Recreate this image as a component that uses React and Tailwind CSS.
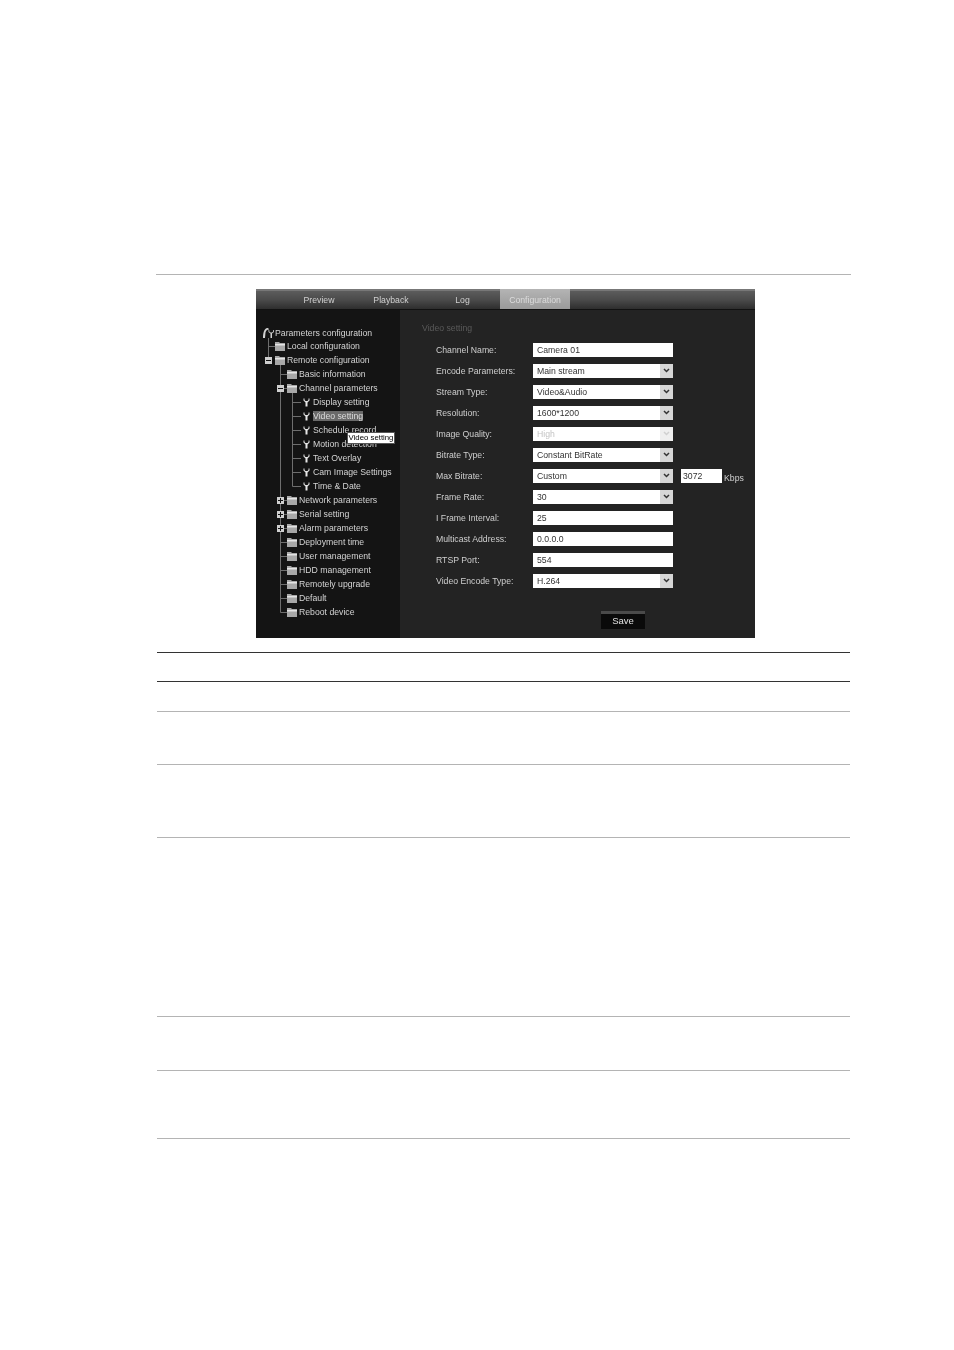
import React from "react";

const tree = [
  { label: "Parameters configuration", type: "root" },
  { label: "Local configuration", type: "folder", depth: 1 },
  { label: "Remote configuration", type: "folder", depth: 1, toggle: "-" },
  { label: "Basic information", type: "folder", depth: 2 },
  { label: "Channel parameters", type: "folder", depth: 2, toggle: "-" },
  { label: "Display setting", type: "leaf" },
  { label: "Video setting", type: "leaf", active: true },
  { label: "Schedule record", type: "leaf" },
  { label: "Motion detection", type: "leaf" },
  { label: "Text Overlay", type: "leaf" },
  { label: "Cam Image Settings", type: "leaf" },
  { label: "Time & Date", type: "leaf" },
  { label: "Network parameters", type: "folder", depth: 2, toggle: "+" },
  { label: "Serial setting", type: "folder", depth: 2, toggle: "+" },
  { label: "Alarm parameters", type: "folder", depth: 2, toggle: "+" },
  { label: "Deployment time", type: "folder", depth: 2 },
  { label: "User management", type: "folder", depth: 2 },
  { label: "HDD management", type: "folder", depth: 2 },
  { label: "Remotely upgrade", type: "folder", depth: 2 },
  { label: "Default", type: "folder", depth: 2 },
  { label: "Reboot device", type: "folder", depth: 2 },
];

const fields = [
  { label: "Channel Name:", value: "Camera 01" },
  { label: "Encode Parameters:", value: "Main stream", select: true },
  { label: "Stream Type:", value: "Video&Audio", select: true },
  { label: "Resolution:", value: "1600*1200", select: true },
  { label: "Image Quality:", value: "High", select: true, disabled: true },
  { label: "Bitrate Type:", value: "Constant BitRate", select: true },
  { label: "Max Bitrate:", value: "Custom", select: true, extra: true },
  { label: "Frame Rate:", value: "30", select: true },
  { label: "I Frame Interval:", value: "25" },
  { label: "Multicast Address:", value: "0.0.0.0" },
  { label: "RTSP Port:", value: "554" },
  { label: "Video Encode Type:", value: "H.264", select: true },
];

// y positions of the table rules under the screenshot
function Rule({ className }) {
  return <div className={`ml-[157px] w-[693px] h-px ${className}`} />;
}

function Folder() {
  return (
    <svg width="10" height="9" viewBox="0 0 10 9" className="shrink-0">
      <path d="M0 0h4l1 1h5v8H0z" fill="#a8a8a8" />
      <path d="M0 2h10v1.500H0z" fill="#e4e4e4" />
    </svg>
  );
}

function Wrench() {
  return (
    <svg width="7" height="9" viewBox="0 0 7 9" className="shrink-0">
      <path d="M0.500 0.500v2l2 2v4h2v-4l2-2v-2l-1 0v1.500l-1 1h-2l-1-1v-1.500z" fill="#e6e6e6" />
    </svg>
  );
}

function Toggle({ sign }) {
  return (
    <span className="relative w-[7px] h-[7px] shrink-0 bg-[#cfcfcf] flex items-center justify-center">
      <span className="w-[5px] h-px bg-[#111]" />
      {sign === "+" && <span className="absolute w-px h-[5px] bg-[#111]" />}
    </span>
  );
}

function TreeRow({ row }) {
  if (row.type === "root") {
    return (
      <div className="h-[13px] flex items-center pl-[6px] text-[#d4d4d4]">
        <svg width="13" height="12" viewBox="0 0 13 12" className="shrink-0">
          <path d="M1 11C1 6 2 2 5 1c1 0 2 .5 2 1.500-2 0-3 1-3.500 3L3 11z" fill="#d0d0d0" />
          <path d="M6.500 3v2l2 1.500V11h1.500V6.500L12 5V3h-.8v1.500L10 5.500H8.500L7.300 4.500V3z" fill="#d0d0d0" />
        </svg>
        <span>{row.label}</span>
      </div>
    );
  }
  if (row.type === "leaf") {
    return (
      <div className="h-[14px] flex items-center pl-[47px] text-[#d4d4d4]">
        <Wrench />
        <span
          className={`ml-[3px] ${row.active ? "bg-[#6a6a6a] text-[#dcdcdc] h-[10px] leading-[10px]" : ""}`}
        >
          {row.label}
        </span>
      </div>
    );
  }
  return (
    <div
      className={`relative h-[14px] flex items-center text-[#d4d4d4] ${
        row.depth === 1 ? "pl-[19px]" : "pl-[31px]"
      }`}
    >
      {row.toggle && (
        <span className={`absolute flex ${row.depth === 1 ? "left-[9px]" : "left-[21px]"}`}>
          <Toggle sign={row.toggle} />
        </span>
      )}
      <Folder />
      <span className="ml-[2px]">{row.label}</span>
    </div>
  );
}

function Field({ field }) {
  return (
    <div className="h-[21px] flex items-center">
      <div className="w-[97px] shrink-0 text-[#cfcfcf]">{field.label}</div>
      <div className="w-[140px] h-[14px] flex bg-white shrink-0">
        <div
          className={`flex-1 pl-[4px] leading-[14px] ${
            field.disabled ? "text-[#c4c4c4]" : "text-[#333]"
          }`}
        >
          {field.value}
        </div>
        {field.select && (
          <div
            className={`w-[13px] flex items-center justify-center ${
              field.disabled ? "bg-[#efefef]" : "bg-[#d6d6d6]"
            }`}
          >
            <svg width="7" height="5" viewBox="0 0 7 5">
              <path
                d="M1 1l2.500 2.500L6 1"
                fill="none"
                strokeWidth="1.500"
                stroke={field.disabled ? "#d0d0d0" : "#333"}
              />
            </svg>
          </div>
        )}
      </div>
      {field.extra && (
        <>
          <div className="ml-[8px] w-[41px] h-[14px] bg-white text-[#333] pl-[2px] leading-[14px]">
            3072
          </div>
          <span className="ml-[2px] mt-[4px] text-[#cfcfcf]">Kbps</span>
        </>
      )}
    </div>
  );
}

export default function App() {
  return (
    <div className="w-[954px] h-[1350px] bg-white pt-[274px] font-['Liberation_Sans',Arial,sans-serif]">
      <div className="ml-[156px] w-[695px] h-px bg-[#b4b4b4]" />

      {/* web interface screenshot */}
      <div className="ml-[256px] mt-[14px] w-[499px] h-[349px] flex flex-col bg-[#232323] text-[8.7px] leading-[14px] blur-[0.4px]">
        <div className="h-[21px] shrink-0 flex pl-[27px] bg-gradient-to-b from-[#5c5c5c] via-[#4a4a4a] to-[#2e2e2e] border-t-2 border-[#777] border-b border-b-[#111]">
          <div className="w-[72px] text-center text-[#d0d0d0] leading-[19px]">Preview</div>
          <div className="w-[72px] text-center text-[#d0d0d0] leading-[19px]">Playback</div>
          <div className="w-[73px] pr-[2px] text-center text-[#d0d0d0] leading-[19px]">Log</div>
          <div className="w-[70px] -mt-[2px] h-[20px] text-center text-[#dcdcdc] leading-[23px] bg-gradient-to-b from-[#b4b4b4] to-[#9a9a9a]">
            Configuration
          </div>
        </div>

        <div className="flex-1 flex">
          {/* left tree */}
          <div className="relative w-[144px] shrink-0 bg-[#141414] pt-[16px]">
            <svg className="absolute left-0 top-0" width="144" height="328" viewBox="0 0 144 328">
              <g stroke="#6e6e6e" strokeWidth="1" fill="none">
                <path d="M12.500 28v22M12.500 36.500H19" />
                <path d="M24.500 55v247.500M24.500 64.500H31M24.500 78.500H31M24.500 190.500H31M24.500 204.500H31M24.500 218.500H31M24.500 232.500H31M24.500 246.500H31M24.500 260.500H31M24.500 274.500H31M24.500 288.500H31M24.500 302.500H31" />
                <path d="M36.500 83v93.500M36.500 92.500H45M36.500 106.500H45M36.500 120.500H45M36.500 134.500H45M36.500 148.500H45M36.500 162.500H45M36.500 176.500H45" />
              </g>
            </svg>
            <div className="relative">
              {tree.map((row) => (
                <TreeRow key={row.label} row={row} />
              ))}
            </div>
            <div className="absolute left-[91px] top-[122px] h-[12px] w-[48px] bg-white border border-[#555] text-black text-[7.8px] leading-[10px] text-center whitespace-nowrap">
              Video setting
            </div>
          </div>

          {/* right form */}
          <div className="flex-1 pl-[22px] pt-[11px]">
            <div className="text-[#5a5a5a] h-[14px] leading-[14px]">Video setting</div>
            <div className="pl-[14px] pt-[4px]">
              {fields.map((f) => (
                <Field key={f.label} field={f} />
              ))}
            </div>
            <div className="ml-[179px] mt-[20px] w-[44px] h-[18px] bg-[#0a0a0a] border-t-[3px] border-[#4a4a4a] text-center text-[#e0e0e0] leading-[13px] text-[9.5px]">
              Save
            </div>
          </div>
        </div>
      </div>

      {/* table rules, text of the page is empty */}
      <Rule className="mt-[14px] bg-[#333]" />
      <Rule className="mt-[28px] bg-[#333]" />
      <Rule className="mt-[29px] bg-[#b4b4b4]" />
      <Rule className="mt-[52px] bg-[#b4b4b4]" />
      <Rule className="mt-[72px] bg-[#b4b4b4]" />
      <Rule className="mt-[178px] bg-[#b4b4b4]" />
      <Rule className="mt-[53px] bg-[#b4b4b4]" />
      <Rule className="mt-[67px] bg-[#b4b4b4]" />
    </div>
  );
}
